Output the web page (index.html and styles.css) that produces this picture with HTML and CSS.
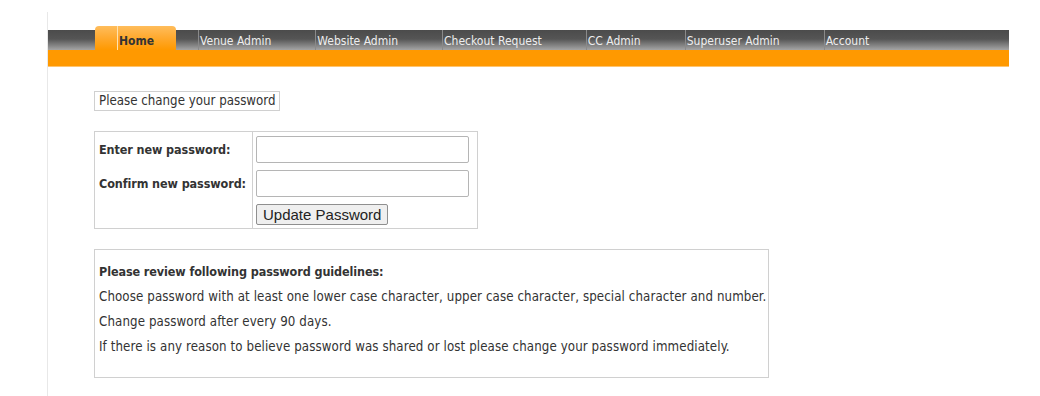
FILE: index.html
```html
<!DOCTYPE html>
<html lang="en">
<head>
  <meta charset="UTF-8">
  <meta name="viewport" content="width=device-width, initial-scale=1.0">
  <title>Change Password</title>
  <link rel="stylesheet" href="styles.css">
</head>
<body>
  <div class="page">
    <ul class="nav">
      <li class="active"><a href="#">Home</a></li>
      <li><a href="#">Venue Admin</a></li>
      <li><a href="#">Website Admin</a></li>
      <li><a href="#">Checkout Request</a></li>
      <li><a href="#">CC Admin</a></li>
      <li><a href="#">Superuser Admin</a></li>
      <li><a href="#">Account</a></li>
    </ul>
    <div class="nav-band"></div>

    <div class="content">
      <div class="notice">Please change your password</div>

      <table class="pw-form">
        <tr>
          <td class="label">Enter new password:</td>
          <td class="field"><input type="password"></td>
        </tr>
        <tr>
          <td class="label">Confirm new password:</td>
          <td class="field"><input type="password"></td>
        </tr>
        <tr>
          <td class="label"></td>
          <td class="field"><button type="button">Update Password</button></td>
        </tr>
      </table>

      <div class="guidelines">
        <p class="title">Please review following password guidelines:</p>
        <p>Choose password with at least one lower case character, upper case character, special character and number.</p>
        <p>Change password after every 90 days.</p>
        <p>If there is any reason to believe password was shared or lost please change your password immediately.</p>
      </div>
    </div>
  </div>
</body>
</html>
```

FILE: styles.css
```css
body {
  margin: 0;
  font-family: "DejaVu Sans Condensed", "DejaVu Sans", sans-serif;
  font-size: 13.2px;
  color: #333;
  background: #fff;
}

.page {
  margin: 12px 0 0 47px;
  padding-top: 18px;
  width: 961px;
  min-height: 366px;
  border-left: 1px solid #e8e8e8;
}

/* top menu */
.nav {
  display: flex;
  list-style: none;
  margin: 0;
  padding: 0 0 0 47px;
  height: 20px;
  background: linear-gradient(#4b4b4b 0%, #555 45%, #a5a5a5 100%);
}

.nav li {
  padding-left: 22px;
  height: 20px;
}

.nav a {
  display: block;
  height: 20px;
  line-height: 22px;
  padding: 0 22px 0 1px;
  border-left: 1px solid #8a8a8a;
  color: #eee;
  font-size: 12px;
  text-decoration: none;
}

.nav li.active {
  margin-top: -4px;
  height: 24px;
  border-radius: 4px 4px 0 0;
  background: linear-gradient(#ffbd5c 0%, #ffa92e 50%, #ff9900 100%);
}

.nav li.active a {
  height: 20px;
  padding-top: 4px;
  border-left-color: #ffe2b0;
  color: #333;
  font-weight: bold;
}

.nav-band {
  height: 16px;
  background: #ff9900;
  border-bottom: 1px solid #ffc46e;
}

/* page body */
.content {
  padding: 24px 0 0 46px;
}

.notice {
  display: inline-block;
  border: 1px solid #d0d0d0;
  padding: 0 4px;
  line-height: 18px;
}

.pw-form {
  margin-top: 20px;
  border-collapse: collapse;
  border: 1px solid #d0d0d0;
}

.pw-form td {
  padding: 4px 3px 3px;
  vertical-align: middle;
}

.pw-form td.label {
  width: 150px;
  padding-left: 4px;
  border-right: 1px solid #d0d0d0;
  font-size: 12.5px;
  font-weight: bold;
  letter-spacing: -0.1px;
  white-space: nowrap;
}

.pw-form td.field {
  width: 218px;
}

.pw-form input {
  display: block;
  box-sizing: border-box;
  width: 213px;
  height: 27px;
  margin: 0;
  border: 1px solid #b5b5b5;
  border-radius: 2px;
}

.pw-form button {
  display: block;
  margin: 0;
  padding: 1px 6px;
  font-family: "Liberation Sans", Arial, sans-serif;
  font-size: 15px;
  line-height: 17px;
  color: #222;
  background: #efefef;
  border: 1px solid #8f8f8f;
  border-radius: 2px;
}

.guidelines {
  width: 665px;
  margin-top: 20px;
  padding: 6px 4px 14px;
  border: 1px solid #d0d0d0;
}

.guidelines p {
  margin: 7px 0;
  line-height: 18px;
  letter-spacing: 0.1px;
  white-space: nowrap;
}

.guidelines p.title {
  font-size: 12.5px;
  font-weight: bold;
  letter-spacing: -0.1px;
}
```
